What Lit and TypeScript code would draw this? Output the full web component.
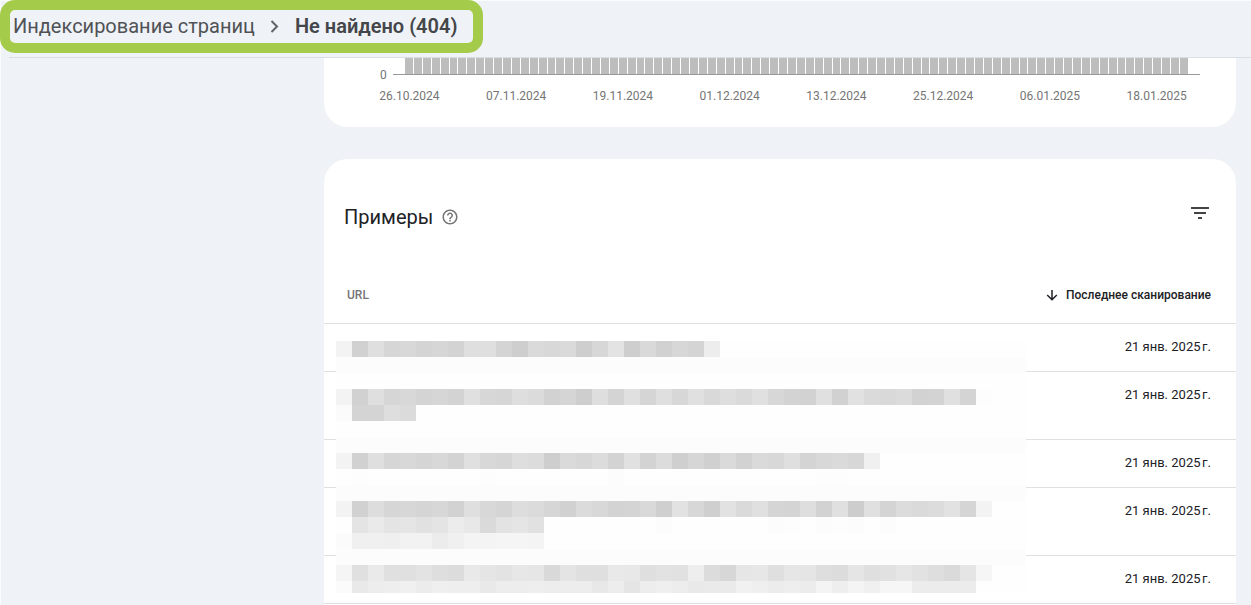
import { LitElement, html, svg, css } from "lit";
import { customElement } from "lit/decorators.js";

const DATES = [
  "26.10.2024", "07.11.2024", "19.11.2024", "01.12.2024",
  "13.12.2024", "25.12.2024", "06.01.2025", "18.01.2025",
];

const ROWS = [
  { date: "21 янв. 2025\u202fг.", tall: false },
  { date: "21 янв. 2025\u202fг.", tall: true },
  { date: "21 янв. 2025\u202fг.", tall: false },
  { date: "21 янв. 2025\u202fг.", tall: true },
  { date: "21 янв. 2025\u202fг.", tall: false },
];

// Grey levels of the pixelated addresses, one hex pair per 16px block; ".." leaves the block empty.
const CELL = 16;
const MOSAIC: string[] = [
  "f3 d1 df d6 d8 d4 d6 d3 df df d4 ce da d8 da ce d7 e3 ce d9 d1 d7 d4 ed",
  "band",
  "",
  "f3 d1 df d6 d8 d4 d6 d3 e0 d7 d6 de db d2 d5 ce de d4 e0 d5 df d7 e0 d9 de da e0 d7 d3 d2 e0 d1 e1 da d9 db d2 d3 e0 d4 fd",
  "fb d4 d4 de db",
  "",
  "band",
  "f3 d1 df d6 d8 d5 d8 d3 e0 d8 d6 de dc ce da d7 dc d3 e1 d3 dc cf d6 d0 da d2 da d8 df d4 d8 da d7 f0",
  ".. fd .. .. .. .. .. .. .. fd .. .. .. .. .. .. .. fc .. .. .. .. .. .. .. .. .. .. .. .. fd fd",
  "band",
  "f3 d1 dd d6 d7 d5 d7 d2 df d8 d5 dd db d6 d1 db d8 d3 d4 d9 cf e2 d7 cf e2 da e0 d5 d4 de d2 e0 cd e0 d4 dc da dc e2 d5 f3",
  ".. e4 ea e4 e5 e1 e4 ec e8 da e3 e5 e1 .. .. .. .. .. .. .. fc .. .. .. .. .. .. fc fd .. fc fd fc .. fc",
  "fb f0 f0 ef f2 f2 ec f0 f4 f4 f5 f5 f4",
  "band",
  "f5 e0 ea e0 e0 e3 de dc e9 e5 e3 e7 e6 d9 e4 df df e9 e8 df e2 e1 ee dc d7 e6 e7 df e6 e5 de dc e5 df e1 e6 e2 de da e5 f6",
  "fb e9 ed ee f0 ec ef ee ee e9 ed ed ee ed ed ed e8 ed e5 ed ef ed e9 ea ea f1 ef ec ee ec f4 ee f4 f0 f6 f6 ec ec ec ec",
];

@customElement("app-root")
export class AppRoot extends LitElement {
  static styles = css`
    :host {
      display: flex;
      flex-direction: column;
      min-height: 100vh;
      background: #eff3f8;
      box-shadow: inset 1px 1px 0 #fbfcfd;
      font-family: Roboto, "Noto Sans", sans-serif;
      color: #202124;
    }
    * { box-sizing: border-box; }
    button {
      display: inline-flex;
      align-items: center;
      padding: 0;
      border: 0;
      background: none;
      color: inherit;
      font: inherit;
      cursor: pointer;
    }
    svg { display: block; }
    .topbar {
      display: flex;
      flex-direction: column;
      align-items: flex-start;
    }
    .crumbs {
      display: flex;
      align-items: center;
      height: 53px;
      padding: 0 16px 1px 3px;
      border: 10px solid #a5cb4b;
      border-radius: 15px;
      font-size: 20px;
      line-height: 28px;
      color: #505255;
      white-space: nowrap;
    }
    .crumbs a { color: inherit; text-decoration: none; }
    .crumbs .sep { margin: 0 10px; color: #5f6368; }
    .crumbs .current { font-weight: 600; color: #444649; }
    .rule {
      align-self: stretch;
      height: 1px;
      margin: 4px 0 0 9px;
      background: #dadfe4;
    }
    main {
      flex: 1;
      display: flex;
      flex-direction: column;
      gap: 32px;
      margin: 0 15px 0 324px;
    }
    .card { background: #fff; }
    .chart {
      padding-bottom: 23px;
      border-radius: 0 0 24px 24px;
    }
    .plot {
      display: flex;
      padding: 0 36px 0 56px;
      font-size: 12px;
      line-height: 14px;
      color: #757575;
    }
    .zero { width: 13px; padding-top: 10px; }
    .bars {
      flex: 1;
      display: flex;
      gap: 1px;
      height: 17px;
      padding: 0 12px;
      border-bottom: 1px solid #999;
    }
    .bar { flex: 1; background: #bdbdbd; }
    .dates {
      display: grid;
      grid-template-columns: repeat(8, 1fr);
      margin: 6px 26px 0 32px;
      text-align: center;
      font-size: 12px;
      line-height: 16px;
      color: #757575;
    }
    .examples {
      flex: 1;
      border-radius: 24px 24px 0 0;
    }
    .head {
      display: flex;
      justify-content: space-between;
      align-items: flex-start;
      padding: 42px 24px 33px 20px;
    }
    .title { display: flex; align-items: center; gap: 8px; }
    h2 {
      margin: 0;
      font-size: 20px;
      line-height: 32px;
      font-weight: 400;
    }
    .help { color: #757575; }
    .filter { color: #444; }
    .table-wrap { position: relative; }
    table {
      width: 100%;
      border-collapse: separate;
      border-spacing: 0;
    }
    th {
      height: 58px;
      padding: 0 25px 0 23px;
      border-bottom: 1px solid #e0e0e0;
      text-align: left;
      font-size: 12px;
      line-height: 16px;
      font-weight: 500;
      color: #757575;
    }
    th.date { text-align: right; color: #202124; }
    .sort { gap: 6px; vertical-align: middle; }
    td {
      height: 48px;
      padding: 13px 25px 14px;
      border-bottom: 1px solid #e0e0e0;
      vertical-align: top;
      font-size: 13px;
      line-height: 20px;
    }
    .tall td { height: 68px; }
    td.date { text-align: right; white-space: nowrap; }
    .mosaic {
      position: absolute;
      top: 75px;
      left: 12px;
    }
  `;

  private mosaic() {
    const blocks = MOSAIC.map((line, r) => {
      if (line === "band") {
        return svg`<rect x="0" y=${r * CELL} width="690" height=${CELL} fill="#fcfcfc"/>`;
      }
      return line.split(" ").map((v, c) =>
        v === "" || v === ".."
          ? null
          : svg`<rect x=${c * CELL} y=${r * CELL} width=${CELL} height=${CELL} fill=${"#" + v + v + v}/>`
      );
    });
    return html`<svg class="mosaic" width="690" height="252" shape-rendering="crispEdges" aria-hidden="true">
      <rect width="690" height="252" fill="#fefefe"/>${blocks}
    </svg>`;
  }

  render() {
    return html`
      <header class="topbar">
        <nav class="crumbs">
          <a href="#">Индексирование страниц</a>
          <svg class="sep" width="20" height="20" viewBox="0 0 20 20" fill="none" stroke="currentColor" stroke-width="2" aria-hidden="true">
            <path d="M6.500 5l5.500 5.500-5.500 5.500"/>
          </svg>
          <span class="current">Не найдено (404)</span>
        </nav>
        <div class="rule"></div>
      </header>
      <main>
        <section class="card chart">
          <div class="plot">
            <span class="zero">0</span>
            <div class="bars">${Array.from({ length: 88 }, () => html`<span class="bar"></span>`)}</div>
          </div>
          <div class="dates">${DATES.map((d) => html`<span>${d}</span>`)}</div>
        </section>
        <section class="card examples">
          <div class="head">
            <div class="title">
              <h2>Примеры</h2>
              <button class="help" aria-label="Справка">
                <svg width="18" height="18" viewBox="0 0 24 24" fill="currentColor">
                  <path d="M11 18h2v-2h-2v2zm1-16C6.48 2 2 6.48 2 12s4.48 10 10 10 10-4.480 10-10S17.520 2 12 2zm0 18c-4.410 0-8-3.590-8-8s3.590-8 8-8 8 3.590 8 8-3.590 8-8 8zm0-14c-2.210 0-4 1.790-4 4h2c0-1.100.9-2 2-2s2 .9 2 2c0 2-3 1.750-3 5h2c0-2.250 3-2.500 3-5 0-2.210-1.790-4-4-4z"/>
                </svg>
              </button>
            </div>
            <button class="filter" aria-label="Фильтр">
              <svg width="24" height="24" viewBox="0 0 24 24" fill="currentColor">
                <path d="M10 18h4v-2h-4v2zM3 6v2h18V6H3zm3 7h12v-2H6v2z"/>
              </svg>
            </button>
          </div>
          <div class="table-wrap">
            <table>
              <thead>
                <tr>
                  <th scope="col">URL</th>
                  <th scope="col" class="date">
                    <button class="sort">
                      <svg width="16" height="16" viewBox="0 0 16 16" fill="none" stroke="currentColor" stroke-width="1.5" aria-hidden="true">
                        <path d="M8 3v9.500M3.200 8L8 12.800 12.800 8"/>
                      </svg>
                      Последнее сканирование
                    </button>
                  </th>
                </tr>
              </thead>
              <tbody>
                ${ROWS.map((row) => html`<tr class=${row.tall ? "tall" : ""}><td></td><td class="date">${row.date}</td></tr>`)}
              </tbody>
            </table>
            ${this.mosaic()}
          </div>
        </section>
      </main>
    `;
  }
}
